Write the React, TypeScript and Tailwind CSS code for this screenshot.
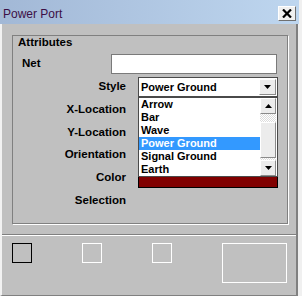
import React from "react";

const items = ["Arrow", "Bar", "Wave", "Power Ground", "Signal Ground", "Earth"];
const labels = ["Style", "X-Location", "Y-Location", "Orientation", "Color", "Selection"];

function Arrow({ up = false }: { up?: boolean }) {
  return (
    <svg width="7" height="4" viewBox="0 0 7 4" className="block">
      <polygon points={up ? "0,4 7,4 3.5,0" : "0,0 7,0 3.5,4"} fill="#000" />
    </svg>
  );
}

function SmallButton({ up = false, className = "" }: { up?: boolean; className?: string }) {
  return (
    <div
      className={`flex items-center justify-center bg-[#ececec] border border-t-white border-l-white border-r-[#8a8a8a] border-b-[#8a8a8a] ${className}`}
    >
      <Arrow up={up} />
    </div>
  );
}

export default function App() {
  return (
    <div
      className="w-[302px] h-[296px] bg-[#f0f0f0] overflow-hidden"
      style={{ fontFamily: '"Liberation Sans", Arial, sans-serif' }}
    >
      <div className="w-[299px] h-[296px] flex flex-col">
        {/* title bar */}
        <div className="h-[24px] flex items-start justify-between bg-gradient-to-r from-[#a2b8d6] to-[#bed6ef] pl-[3px] pr-[3px]">
          <span className="mt-[6px] text-[12px] leading-[16px] text-[#3c0f46]">Power Port</span>
          <div className="mt-[6px] w-[18px] h-[15px] flex items-center justify-center bg-[#f0f0f0] border border-t-white border-l-white border-r-[#707070] border-b-[#707070]">
            <svg width="10" height="9" viewBox="0 0 10 9">
              <path d="M1 0.5 L9 8.5 M9 0.5 L1 8.5" stroke="#000" strokeWidth="2.2" />
            </svg>
          </div>
        </div>

        {/* body */}
        <div className="w-[298px] flex-1 flex flex-col bg-[#c0c0c0] border-l-2 border-l-[#f2f2f2] border-r-2 border-r-[#808080] border-b border-b-[#808080]">
          <div className="h-[211px] pt-[11px] pl-[10px] border-b border-b-[#808080]">
            {/* group box */}
            <div className="w-[277px] h-[190px] border border-t-[#808080] border-l-[#808080] border-r-white border-b-white shadow-[inset_-1px_-1px_0_#808080] text-black">
              <div className="pl-[5px] text-[11.5px] leading-[13px] font-bold">Attributes</div>

              <div className="mt-[5px] flex items-center h-[20px]">
                <div className="w-[98px] pl-[9px] text-[11.5px] font-bold leading-none">Net</div>
                <div className="w-[166px] h-[20px] bg-white border border-[#7a7a7a]" />
              </div>

              <div className="mt-[3px] flex flex-col gap-[2.7px]">
                {labels.map((label) => (
                  <div key={label} className="flex items-center h-[20px]">
                    <div className="w-[113px] text-right text-[11.5px] font-bold leading-none">{label}</div>
                    <div className="ml-[12px] w-[140px] h-[20px] relative">
                      {label === "Style" && (
                        <>
                          <div className="h-[20px] flex items-center justify-between bg-white border border-[#4a4a4a] pl-[2px] pr-[1px]">
                            <span className="text-[11px] font-bold leading-none">Power Ground</span>
                            <SmallButton className="w-[17px] h-[16px]" />
                          </div>
                          <div className="absolute left-0 top-[20px] z-10 w-[140px] h-[80px] flex bg-white border border-[#4a4a4a]">
                            <div className="flex-1 flex flex-col">
                              {items.map((it) => (
                                <div
                                  key={it}
                                  className={`h-[13px] flex items-center pl-[2px] text-[11px] font-bold leading-none ${
                                    it === "Power Ground" ? "bg-[#3399ff] text-white" : "text-black"
                                  }`}
                                >
                                  {it}
                                </div>
                              ))}
                            </div>
                            <div className="w-[17px] pr-[1px] flex flex-col">
                              <SmallButton up className="h-[16px]" />
                              <div className="h-[8px] bg-[repeating-conic-gradient(#ffffff_0_25%,#dcdcdc_0_50%)] bg-[length:2px_2px]" />
                              <div className="h-[36px] bg-[#ececec] border border-t-white border-l-white border-r-[#8a8a8a] border-b-[#8a8a8a]" />
                              <div className="h-[2px] bg-[repeating-conic-gradient(#ffffff_0_25%,#dcdcdc_0_50%)] bg-[length:2px_2px]" />
                              <SmallButton className="h-[16px]" />
                            </div>
                          </div>
                        </>
                      )}
                      {label === "Color" && (
                        <div className="h-[20px] bg-[#800000] border border-black" />
                      )}
                    </div>
                  </div>
                ))}
              </div>
            </div>
          </div>

          {/* bottom panel */}
          <div className="flex-1 border-t border-t-white pl-[10px] pt-[7px] flex items-start gap-[50px]">
            <div className="w-[20px] h-[20px] border-[1.5px] border-black" />
            <div className="w-[20px] h-[20px] border border-white" />
            <div className="w-[20px] h-[20px] border border-white" />
            <div className="w-[65px] h-[40px] border border-white" />
          </div>
        </div>
      </div>
    </div>
  );
}
